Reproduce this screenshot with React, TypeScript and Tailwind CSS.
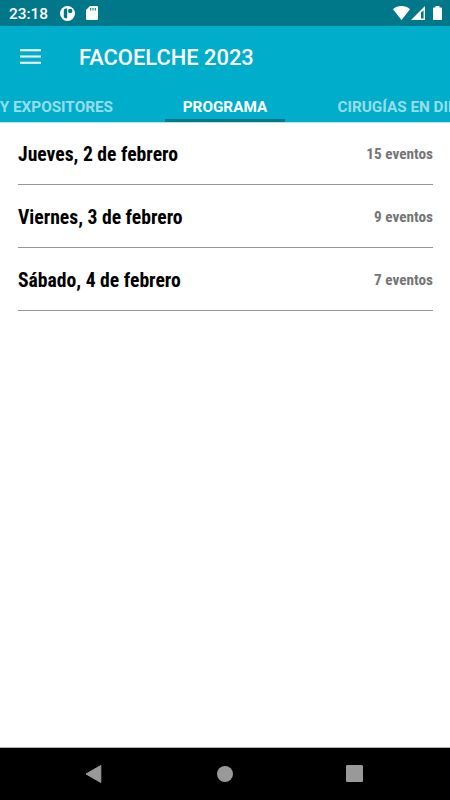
const days = [
  { label: "Jueves, 2 de febrero", events: "15 eventos" },
  { label: "Viernes, 3 de febrero", events: "9 eventos" },
  { label: "Sábado, 4 de febrero", events: "7 eventos" },
];

function StatusBar() {
  return (
    <div className="flex h-[26px] shrink-0 items-center bg-[#00788a] pl-[9px] pr-2 text-white">
      <span className="w-[51px] pt-px text-[15.4px] leading-[26px] font-medium whitespace-nowrap">23:18</span>
      <svg width="15" height="15" viewBox="0 0 15 15" className="shrink-0">
        <circle cx="7.5" cy="7.5" r="7.5" fill="white" />
        <path d="M7.2 2.6H5.6A1.8 1.8 0 0 0 3.800 4.400v6a1.8 1.8 0 0 0 1.8 1.8h1.600z" fill="#00788a" />
        <circle cx="10.2" cy="4.900" r="2.200" fill="#00788a" />
      </svg>
      <svg width="12" height="14" viewBox="0 0 12 14" className="ml-[11px] shrink-0">
        <path d="M4 0h6.8A1.2 1.2 0 0 1 12 1.2v11.6a1.2 1.2 0 0 1-1.2 1.2H1.2A1.2 1.2 0 0 1 0 12.8V4z" fill="white" />
        <path d="M4.7 2v2.4M7 2v2.4M9.3 2v2.4" stroke="#00788a" strokeWidth="1.1" />
      </svg>
      <svg width="17" height="14" viewBox="0 0 17 14" className="ml-auto shrink-0">
        <path d="M8.5 14L0 3.2C2.3 1.2 5.2 0 8.5 0S14.7 1.2 17 3.2z" fill="white" />
      </svg>
      <svg width="14" height="14" viewBox="0 0 14 14" className="ml-[1px] shrink-0">
        <path d="M14 0v14H0z" fill="white" />
        <path d="M10 6.2L12.6 4.5v8H10z" fill="#00788a" />
      </svg>
      <svg width="9" height="14" viewBox="0 0 9 14" className="ml-[8px] shrink-0">
        <path d="M2.5 0h4v1.5h1.7a.8.8 0 0 1 .8.8v10.9a.8.8 0 0 1-.8.8H.8a.8.8 0 0 1-.8-.8V2.3a.8.8 0 0 1 .8-.8h1.7z" fill="white" />
      </svg>
    </div>
  );
}

function Tabs() {
  return (
    <div className="flex h-[33px] overflow-hidden text-[15.3px] leading-[37px] font-bold whitespace-nowrap text-white/60">
      <div className="flex w-[165px] shrink-0 justify-end pr-[52px]">
        <span>Y EXPOSITORES</span>
      </div>
      <div className="w-[120px] shrink-0 border-b-[3px] border-[#00788a] text-center text-white">PROGRAMA</div>
      <div className="shrink-0 pl-[52.5px]">CIRUGÍAS EN DIRECTO</div>
    </div>
  );
}

export default function App() {
  return (
    <div className="flex h-[800px] w-[450px] flex-col overflow-hidden bg-white font-['Roboto',sans-serif]">
      <StatusBar />
      <header className="h-[97px] shrink-0 border-b border-[#b5e6ef] bg-[#00adca]">
        <div className="flex h-[63px] items-center pl-5 text-white">
          <svg width="21" height="15" viewBox="0 0 21 15" className="mb-[2px] shrink-0">
            <path d="M0 1.2h21M0 7.5h21M0 13.8h21" stroke="white" strokeWidth="2" />
          </svg>
          <h1 className="ml-[38px] pt-[2px] text-[21.9px] font-medium whitespace-nowrap">FACOELCHE 2023</h1>
        </div>
        <Tabs />
      </header>

      <main className="-mt-px flex-1 pr-[17px] pl-[18px] font-bold [font-stretch:75%]">
        {days.map((day) => (
          <div key={day.label} className="flex h-[63px] items-center justify-between border-b border-[#969696] pt-[2px]">
            <span className="pt-[2px] text-[19.65px] text-black">{day.label}</span>
            <span className="text-[15.25px] text-[#757575]">{day.events}</span>
          </div>
        ))}
      </main>

      <nav className="flex h-[53px] shrink-0 items-center border-t border-[#b0b0b0] bg-black pb-px pl-[85px]">
        <svg width="17" height="18" viewBox="0 0 17 18">
          <path d="M15.8.5L1 9l14.8 8.5z" fill="#999" stroke="#999" strokeLinejoin="round" />
        </svg>
        <svg width="16" height="16" viewBox="0 0 16 16" className="ml-[115px]">
          <circle cx="8" cy="8" r="8" fill="#999" />
        </svg>
        <svg width="17" height="17" viewBox="0 0 17 17" className="ml-[113px]">
          <rect width="17" height="17" rx="1.2" fill="#999" />
        </svg>
      </nav>
    </div>
  );
}
